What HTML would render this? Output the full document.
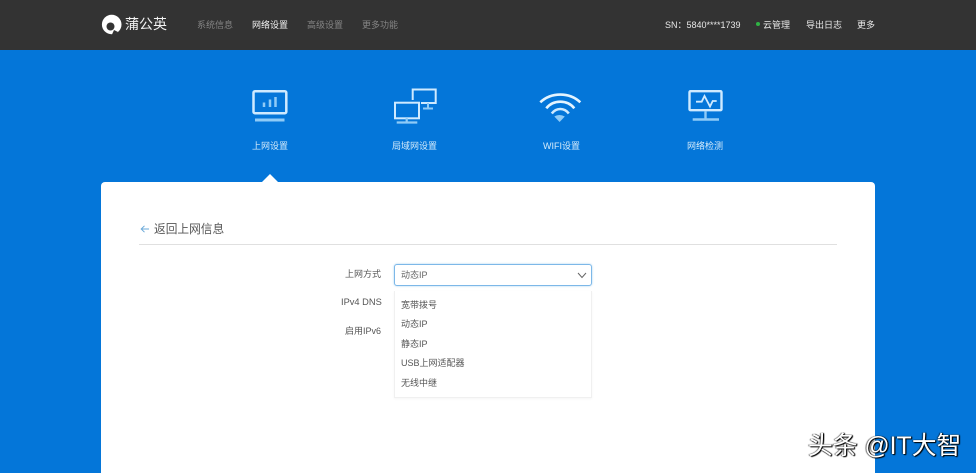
<!DOCTYPE html>
<html lang="zh">
<head>
<meta charset="utf-8">
<style>
html,body{margin:0;padding:0;}
body{width:976px;height:473px;overflow:hidden;position:relative;background:#0476d9;font-family:"Liberation Sans","Noto Sans CJK SC",sans-serif;}
.t{position:absolute;white-space:nowrap;line-height:14px;filter:blur(.25px);}
.hdr{position:absolute;left:0;top:0;width:976px;height:50px;background:#333333;}
.nav{font-size:9px;top:17.500px;color:#858585;}
.r{font-size:9px;top:17.500px;color:#e8e8e8;}
.lab{font-size:9px;top:139px;color:#d5ebfb;}
svg{position:absolute;overflow:visible;}
.card{position:absolute;left:101px;top:182px;width:774px;height:291px;background:#fff;border-radius:4px 4px 0 0;}
.f{font-size:9px;color:#555;}
.o{font-size:9px;color:#555;left:401px;}
</style>
</head>
<body>
<div class="hdr"></div>
<svg style="left:0;top:0" width="976" height="50"><circle cx="111.700" cy="24.500" r="9.800" fill="#fff"/><circle cx="110.500" cy="26.500" r="4" fill="#333"/><path d="M112 34.500A10 10 0 0 0 118 32L114 30Z" fill="#333"/></svg>
<div class="t" style="left:125px;top:15px;font-size:14px;line-height:18px;color:#f2f2f2;">蒲公英</div>
<div class="t nav" style="left:197px;">系统信息</div>
<div class="t nav" style="left:252px;color:#f2f2f2;">网络设置</div>
<div class="t nav" style="left:307px;">高级设置</div>
<div class="t nav" style="left:362px;">更多功能</div>
<div class="t r" style="left:665px;font-size:9px;">SN：5840****1739</div>
<div style="position:absolute;left:756px;top:22px;width:4px;height:4px;border-radius:50%;background:#2fb344;"></div>
<div class="t r" style="left:763px;">云管理</div>
<div class="t r" style="left:806px;">导出日志</div>
<div class="t r" style="left:857px;">更多</div>

<svg style="left:0;top:0" width="976" height="190" fill="none">
<!-- icon 1 -->
<rect x="253.500" y="91.200" width="32.800" height="22" rx="1.500" stroke="#cfeaff" stroke-width="2.500"/>
<path d="M264 107V102.500M270 107V99.500M275.500 107V97" stroke="#8fcbf7" stroke-width="2.500"/>
<path d="M255 120H284.500" stroke="#8fcbf7" stroke-width="3"/>
<!-- icon 2 -->
<path d="M412.700 100V89.500H435.700V103H421" stroke="#cfeaff" stroke-width="2"/>
<path d="M423 108.500H433" stroke="#8fcbf7" stroke-width="2"/>
<path d="M428 103V108" stroke="#8fcbf7" stroke-width="2"/>
<rect x="395" y="102.700" width="24" height="15.600" stroke="#cfeaff" stroke-width="2"/>
<path d="M406.700 118V122M396.700 122.500H417.300" stroke="#8fcbf7" stroke-width="2.200"/>
<!-- icon 3 -->
<path d="M540.300 102.300C551.300 92 569.300 92 580.300 102.300" stroke="#e4f4ff" stroke-width="2.600"/>
<path d="M546.300 108.300C553.300 99.500 567.300 99.500 574.300 108.300" stroke="#e4f4ff" stroke-width="2.600"/>
<path d="M551.800 113.500C556.300 107.500 564.300 107.500 568.800 113.500" stroke="#cfeaff" stroke-width="2.600"/>
<path d="M554.300 116.500Q559.300 113.500 564.800 116.500L559.600 122Z" fill="#8fcbf7"/>
<!-- icon 4 -->
<rect x="689.500" y="91.200" width="32" height="19" rx="1" stroke="#cfeaff" stroke-width="2.400"/>
<path d="M696 101.700H701.700L704.500 96L710 106.500L712.700 101H716.700" stroke="#cfeaff" stroke-width="1.800"/>
<path d="M705.500 111V119M692.700 119.500H719" stroke="#8fcbf7" stroke-width="2.400"/>
</svg>
<div class="t lab" style="left:252px;">上网设置</div>
<div class="t lab" style="left:392px;">局域网设置</div>
<div class="t lab" style="left:543px;">WIFI设置</div>
<div class="t lab" style="left:687px;">网络检测</div>

<div class="card"></div>
<div style="position:absolute;left:262px;top:174px;width:0;height:0;border-left:8px solid transparent;border-right:8px solid transparent;border-bottom:8px solid #fff;"></div>

<svg style="left:140px;top:224px" width="10" height="10" viewBox="0 0 10 10" fill="none"><path d="M9 5H1.500M4.500 1.800L1.200 5L4.500 8.200" stroke="#6aa9d8" stroke-width="1"/></svg>
<div class="t" style="left:154px;top:223px;font-size:11.700px;color:#555;">返回上网信息</div>
<div style="position:absolute;left:139px;top:244px;width:698px;height:1px;background:#e0e0e0;"></div>

<div class="t f" style="left:345px;top:267px;">上网方式</div>
<div class="t f" style="left:341px;top:295px;font-size:9.300px;">IPv4 DNS</div>
<div class="t f" style="left:345px;top:324px;">启用IPv6</div>

<div style="position:absolute;left:394px;top:264px;width:196px;height:19.500px;border:1px solid #7db8e8;border-radius:3px;background:#fff;box-shadow:0 0 2px #a9d2f0;"></div>
<div class="t" style="left:401px;top:268px;font-size:9px;color:#666;">动态IP</div>
<svg style="left:577px;top:272px" width="10" height="7" viewBox="0 0 10 7" fill="none"><path d="M1 1L5 5.500L9 1" stroke="#666" stroke-width="1"/></svg>

<div style="position:absolute;left:394px;top:291px;width:198px;height:107px;background:#fff;border:1px solid #f0f0f0;border-top:0;box-sizing:border-box;box-shadow:0 1px 2px rgba(0,0,0,.04);"></div>
<div class="t o" style="top:298px;">宽带拨号</div>
<div class="t o" style="top:317px;">动态IP</div>
<div class="t o" style="top:337px;">静态IP</div>
<div class="t o" style="top:356px;">USB上网适配器</div>
<div class="t o" style="top:376px;">无线中继</div>

<div class="t" style="left:808px;top:433px;font-size:24.800px;line-height:28px;color:#fff;filter:none;text-shadow:1px 1px 1px #000,-1px 0 1px rgba(0,0,0,.6),1px 0 1px #000;">头条 @IT大智</div>
</body>
</html>
